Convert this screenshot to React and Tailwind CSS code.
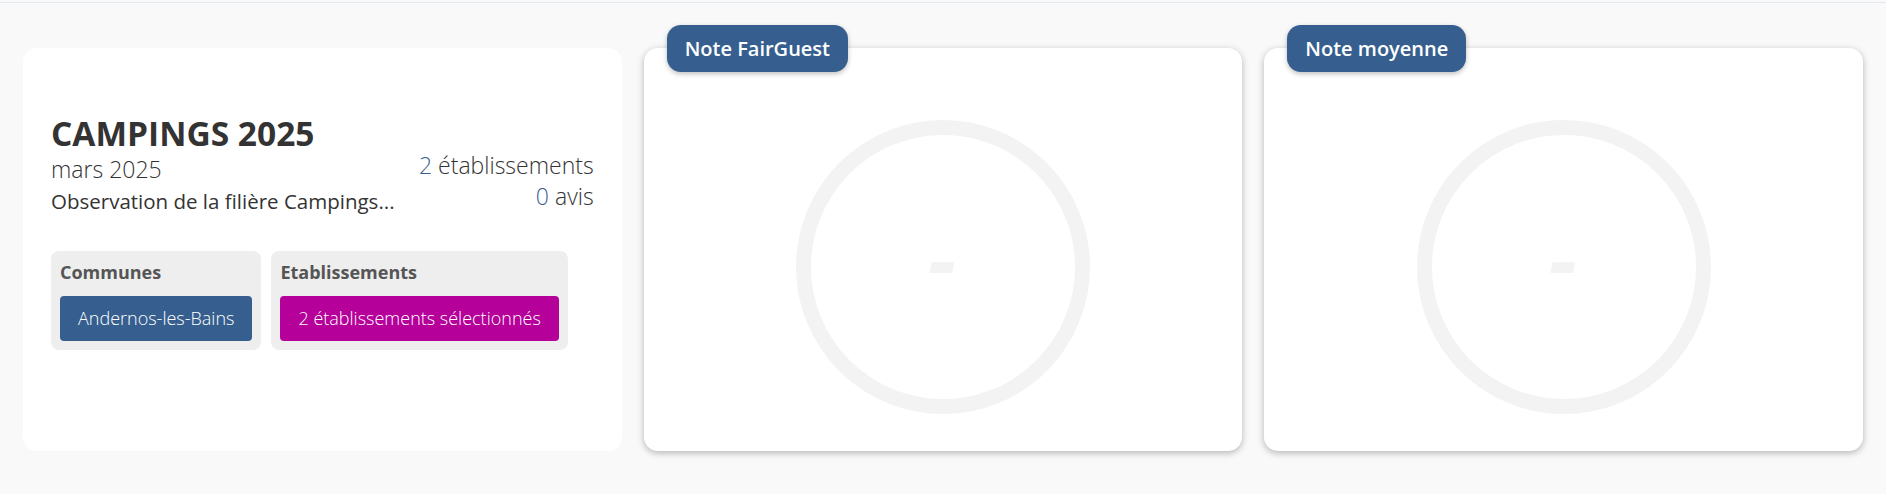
import React from "react";

const blue = "bg-[#365f8f]";

function Gauge() {
    return (
        <svg width="294" height="294" viewBox="0 0 294 294">
            <circle cx="147" cy="147" r="139.5" fill="none" stroke="#f3f3f3" strokeWidth="15" />
            <text
                x="146"
                y="171"
                textAnchor="middle"
                fontSize="88"
                fontWeight="700"
                fontStyle="italic"
                fill="#f3f3f3"
                fontFamily="'Open Sans', sans-serif"
            >
                -
            </text>
        </svg>
    );
}

function NoteCard({ title }) {
    return (
        <div className="relative bg-white rounded-[14px] shadow-[0_2px_7px_rgba(0,0,0,0.28)] h-[403px] flex items-center justify-center pt-[35px]">
            {/* badge */}
            <div className={`absolute left-[23px] top-[-23px] h-[47px] px-[18px] flex items-center rounded-[14px] ${blue} text-white font-semibold text-[20px] shadow-[0_2px_5px_rgba(0,0,0,0.25)]`}>
                {title}
            </div>
            <Gauge />
        </div>
    );
}

function Filter({ label, value, color }) {
    return (
        <div className="bg-[#eeeeee] rounded-[8px] px-[9px] pt-[8px] pb-[9px] flex flex-col items-start">
            <div className="text-[18px] font-bold leading-[27px] text-[#555555]">{label}</div>
            <div className={`mt-[10px] ${color} text-white font-light text-[18px] leading-[27px] py-[9px] px-[18px] rounded-[4px] whitespace-nowrap`}>
                {value}
            </div>
        </div>
    );
}

export default function App() {
    return (
        <div className="min-h-screen bg-[#f9f9f9] text-[#333333] font-['Open_Sans',sans-serif]">
            <div className="h-[2px]" />
            <div className="h-px bg-[#e3e9f0]" />

            <div className="grid grid-cols-3 gap-[22px] px-[23px] pt-[45px] pb-[43px]">
                {/* --- Summary card --- */}
                <div className="bg-white rounded-[14px] h-[403px] px-[28px] pt-[65px]">
                    <div className="flex justify-between items-end">
                        <div>
                            <h1 className="text-[33.5px] font-bold leading-[40px]">CAMPINGS 2025</h1>
                            <div className="text-[23px] font-light leading-[32px]">mars 2025</div>
                            <div className="text-[20.5px] leading-[33px]">Observation de la filière Campings...</div>
                        </div>
                        <div className="text-right text-[23px] font-light leading-[31px] mb-[6px]">
                            <div>
                                <span className="text-[#365f8f]">2</span> établissements
                            </div>
                            <div>
                                <span className="text-[#365f8f]">0</span> avis
                            </div>
                        </div>
                    </div>

                    <div className="mt-[33px] flex gap-[10px]">
                        <Filter label="Communes" value="Andernos-les-Bains" color={blue} />
                        <Filter label="Etablissements" value="2 établissements sélectionnés" color="bg-[#b5009a]" />
                    </div>
                </div>

                <NoteCard title="Note FairGuest" />
                <NoteCard title="Note moyenne" />
            </div>
        </div>
    );
}
